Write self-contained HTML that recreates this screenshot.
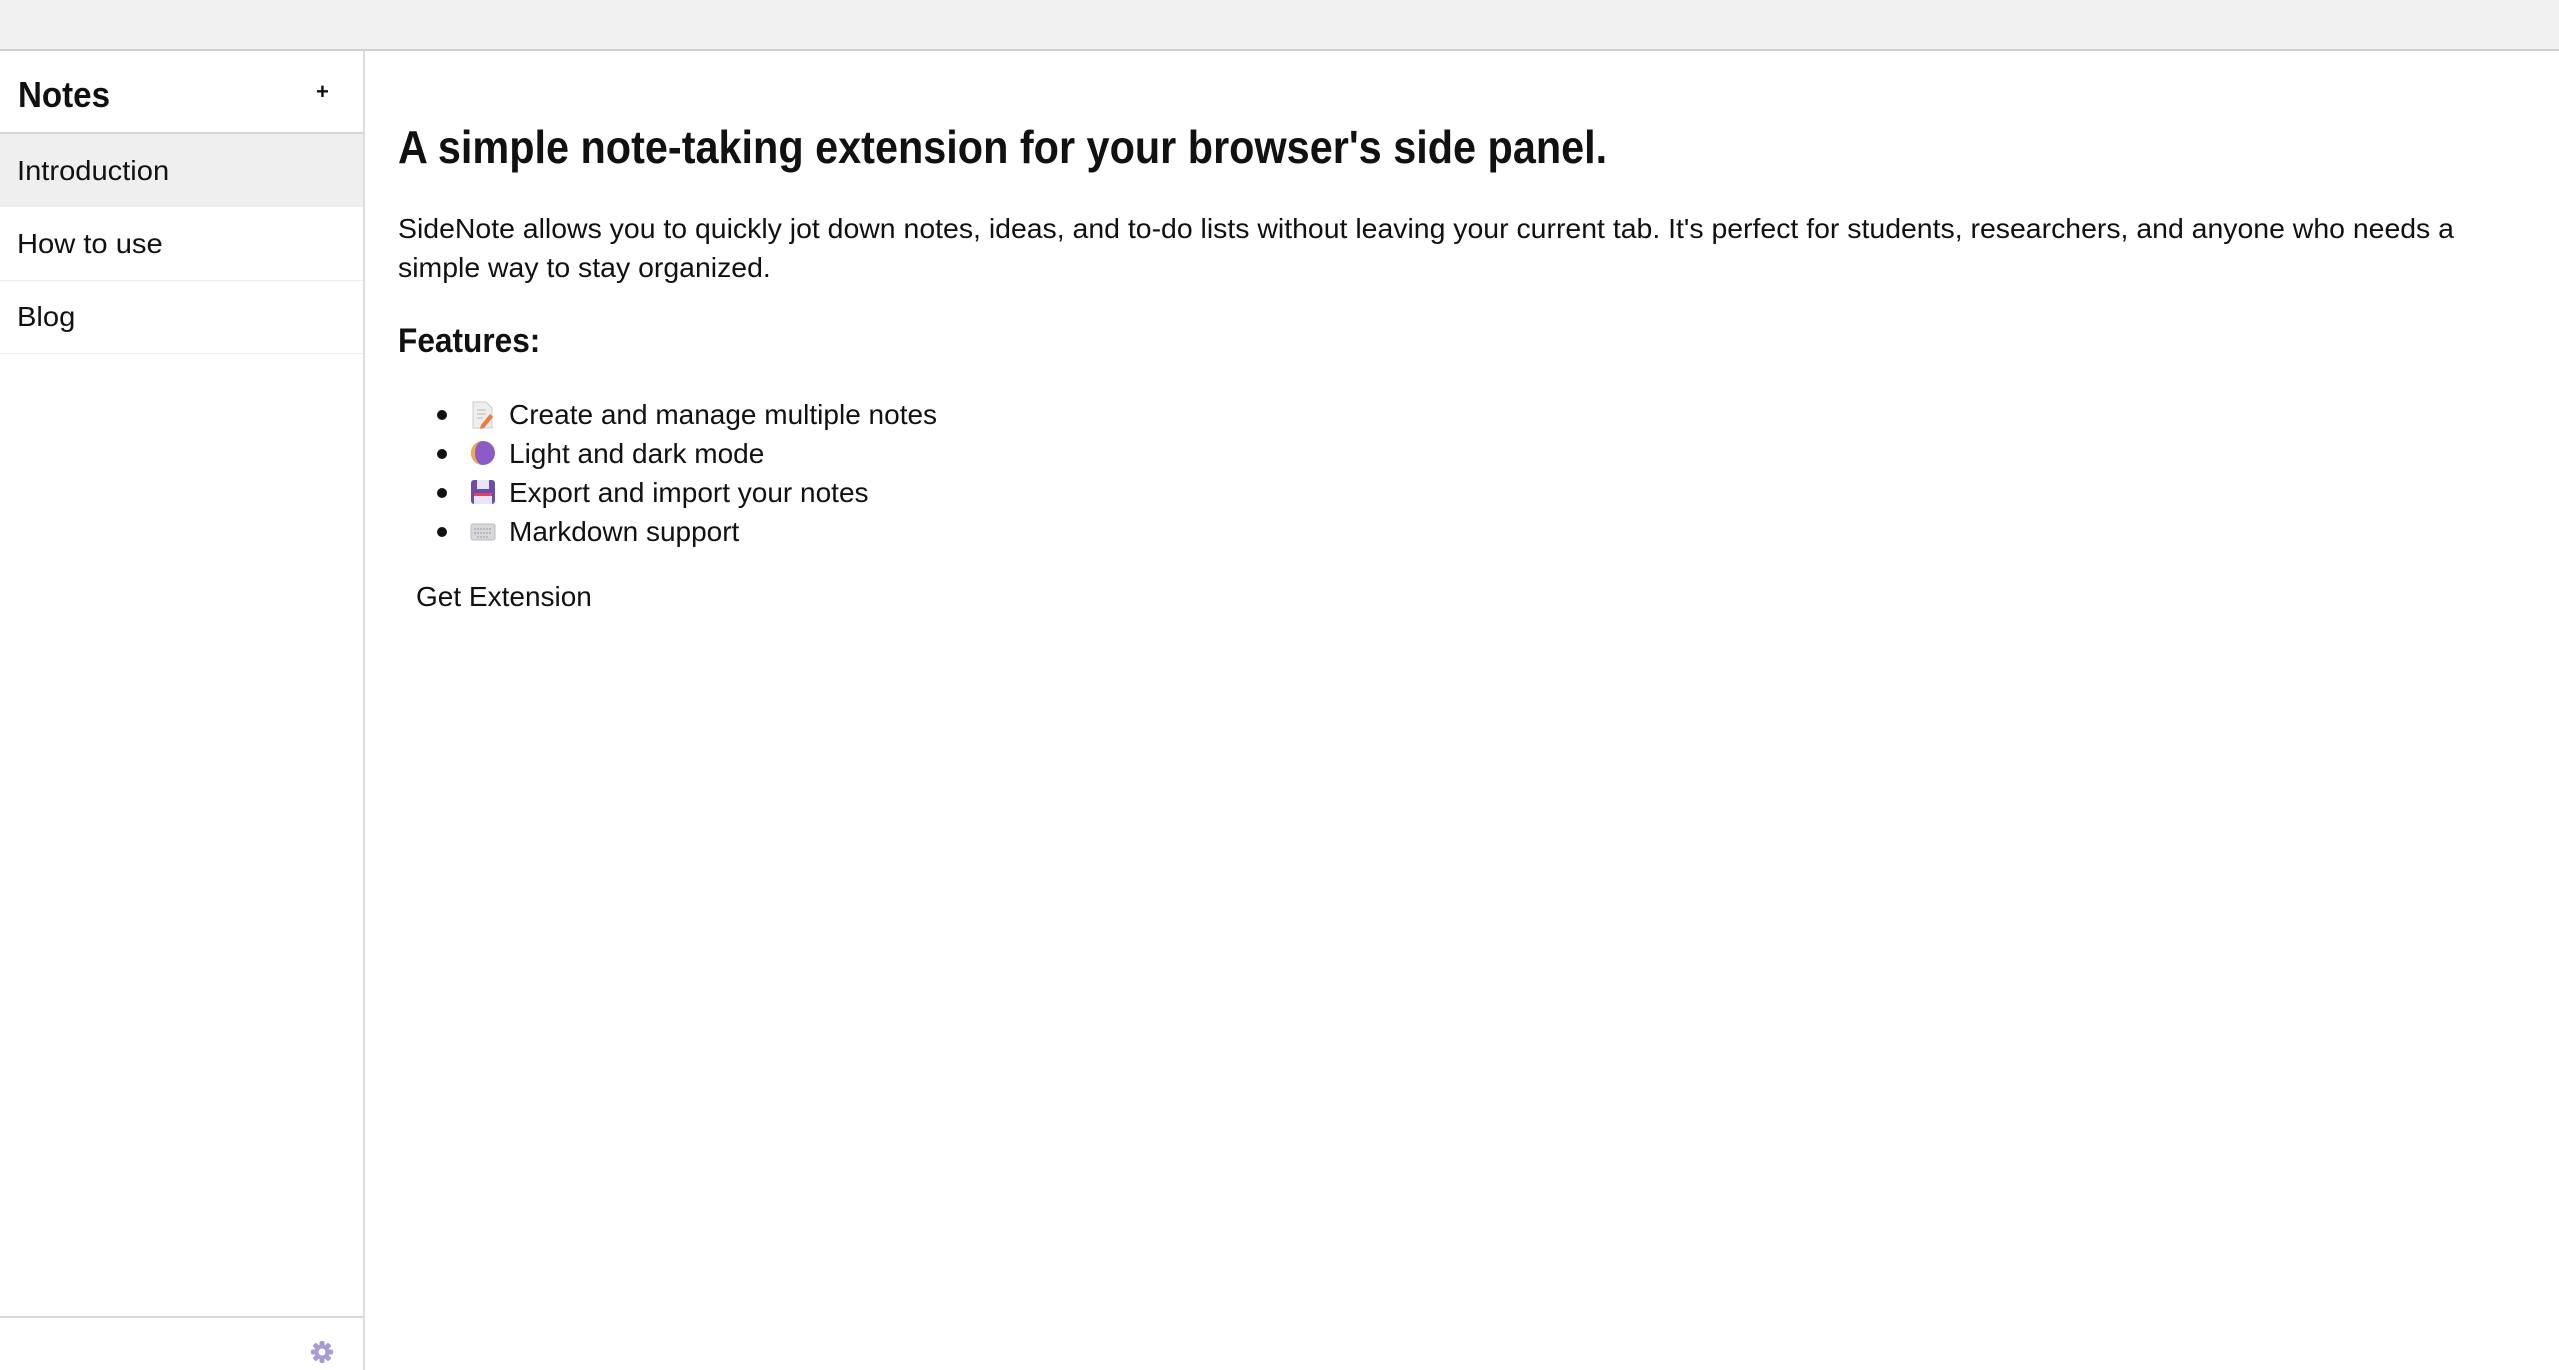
<!DOCTYPE html>
<html><head><meta charset="utf-8"><style>
*{margin:0;padding:0;box-sizing:border-box}
body{width:2559px;height:1370px;overflow:hidden;background:#fff;font-family:"Liberation Sans",sans-serif;color:#111;position:relative}
.top{position:absolute;left:0;top:0;width:2559px;height:51px;background:#f0f0f0;border-bottom:2px solid #d0d0d0}
.side{position:absolute;left:0;top:51px;width:365px;height:1319px;border-right:2px solid #ddd}
.t{position:absolute;white-space:nowrap;transform-origin:0 50%}
.hdrline{position:absolute;left:0;top:132px;width:363px;height:2px;background:#d6d6d6}
.item{position:absolute;left:0;width:363px;border-bottom:1px solid #eee}
.li{position:absolute;width:10px;height:10px;border-radius:50%;background:#111;left:437px}
</style></head><body>
<div class="top"></div>
<div class="side">
  <div class="t" style="left:18px;top:22px;font-size:36px;font-weight:bold;line-height:44px;transform:scaleX(.92)">Notes</div>
  <div style="position:absolute;left:316px;top:28px;font-size:22px;font-weight:bold">+</div>
  <div class="hdrline" style="top:81px"></div>
  <div class="item" style="top:83px;height:73px;background:#efefef;border:none"></div>
  <div class="t" style="left:17px;top:100px;font-size:28px;line-height:40px;transform:scaleX(1.04)">Introduction</div>
  <div class="item" style="top:156px;height:74px"></div>
  <div class="t" style="left:17px;top:173px;font-size:28px;line-height:40px;transform:scaleX(1.04)">How to use</div>
  <div class="item" style="top:230px;height:73px"></div>
  <div class="t" style="left:17px;top:246px;font-size:28px;line-height:40px;transform:scaleX(1.04)">Blog</div>
  <div style="position:absolute;left:0;top:1265px;width:363px;height:2px;background:#d6d6d6"></div>
  <svg style="position:absolute;left:311px;top:1290px" width="22" height="22" viewBox="0 0 22 22"><g fill="#a99bd0"><circle cx="11" cy="11" r="7.5"/><rect x="8.5" y="0" width="5" height="22" rx="1.5"/><rect x="0" y="8.5" width="22" height="5" rx="1.5"/><rect x="8.5" y="0" width="5" height="22" rx="1.5" transform="rotate(45 11 11)"/><rect x="8.5" y="0" width="5" height="22" rx="1.5" transform="rotate(-45 11 11)"/></g><circle cx="11" cy="11" r="3.5" fill="#fff"/></svg>
</div>
<div class="t" style="left:398px;top:120px;font-size:46px;font-weight:bold;line-height:54px;transform:scaleX(.9)">A simple note-taking extension for your browser's side panel.</div>
<div class="t" style="left:398px;top:209px;font-size:28px;line-height:39px;transform:scaleX(1.015)">SideNote allows you to quickly jot down notes, ideas, and to-do lists without leaving your current tab. It's perfect for students, researchers, and anyone who needs a<br>simple way to stay organized.</div>
<div class="t" style="left:398px;top:320px;font-size:34px;font-weight:bold;line-height:42px;transform:scaleX(.93)">Features:</div>
<div class="li" style="top:410px"></div>
<div class="li" style="top:449px"></div>
<div class="li" style="top:488px"></div>
<div class="li" style="top:527px"></div>
<svg style="position:absolute;left:471px;top:401px" width="24" height="28" viewBox="0 0 24 28"><path d="M2 1h13l6 6v20H2z" fill="#eee" stroke="#ccc"/><path d="M6 9h9M6 13h9M6 17h6" stroke="#bbb"/><path d="M10 24l9-11 3 3-9 11-4 1z" fill="#f07a3a"/></svg>
<svg style="position:absolute;left:470px;top:440px" width="26" height="26" viewBox="0 0 26 26"><circle cx="13" cy="13" r="12" fill="#8a5cc4"/><path d="M13 1a12 12 0 0 0 0 24 8 12 0 0 1 0-24z" fill="#f0a848"/></svg>
<svg style="position:absolute;left:470px;top:479px" width="26" height="26" viewBox="0 0 26 26"><rect x="1" y="1" width="24" height="24" rx="3" fill="#6a4ea8"/><rect x="7" y="1" width="12" height="9" fill="#e8e4f4"/><rect x="4" y="14" width="18" height="11" fill="#e8e4f4"/><rect x="4" y="14" width="18" height="3" fill="#e0426a"/></svg>
<svg style="position:absolute;left:470px;top:522px" width="26" height="20" viewBox="0 0 26 20"><rect x="1" y="2" width="24" height="16" rx="2" fill="#d8d8dc" stroke="#bbb"/><path d="M4 7h18M4 11h18M7 15h12" stroke="#999" stroke-dasharray="2 1"/></svg>
<div class="t" style="left:509px;top:395px;font-size:28px;line-height:39px">Create and manage multiple notes<br>Light and dark mode<br>Export and import your notes<br>Markdown support</div>
<div class="t" style="left:416px;top:577px;font-size:28px;line-height:39px">Get Extension</div>
</body></html>
